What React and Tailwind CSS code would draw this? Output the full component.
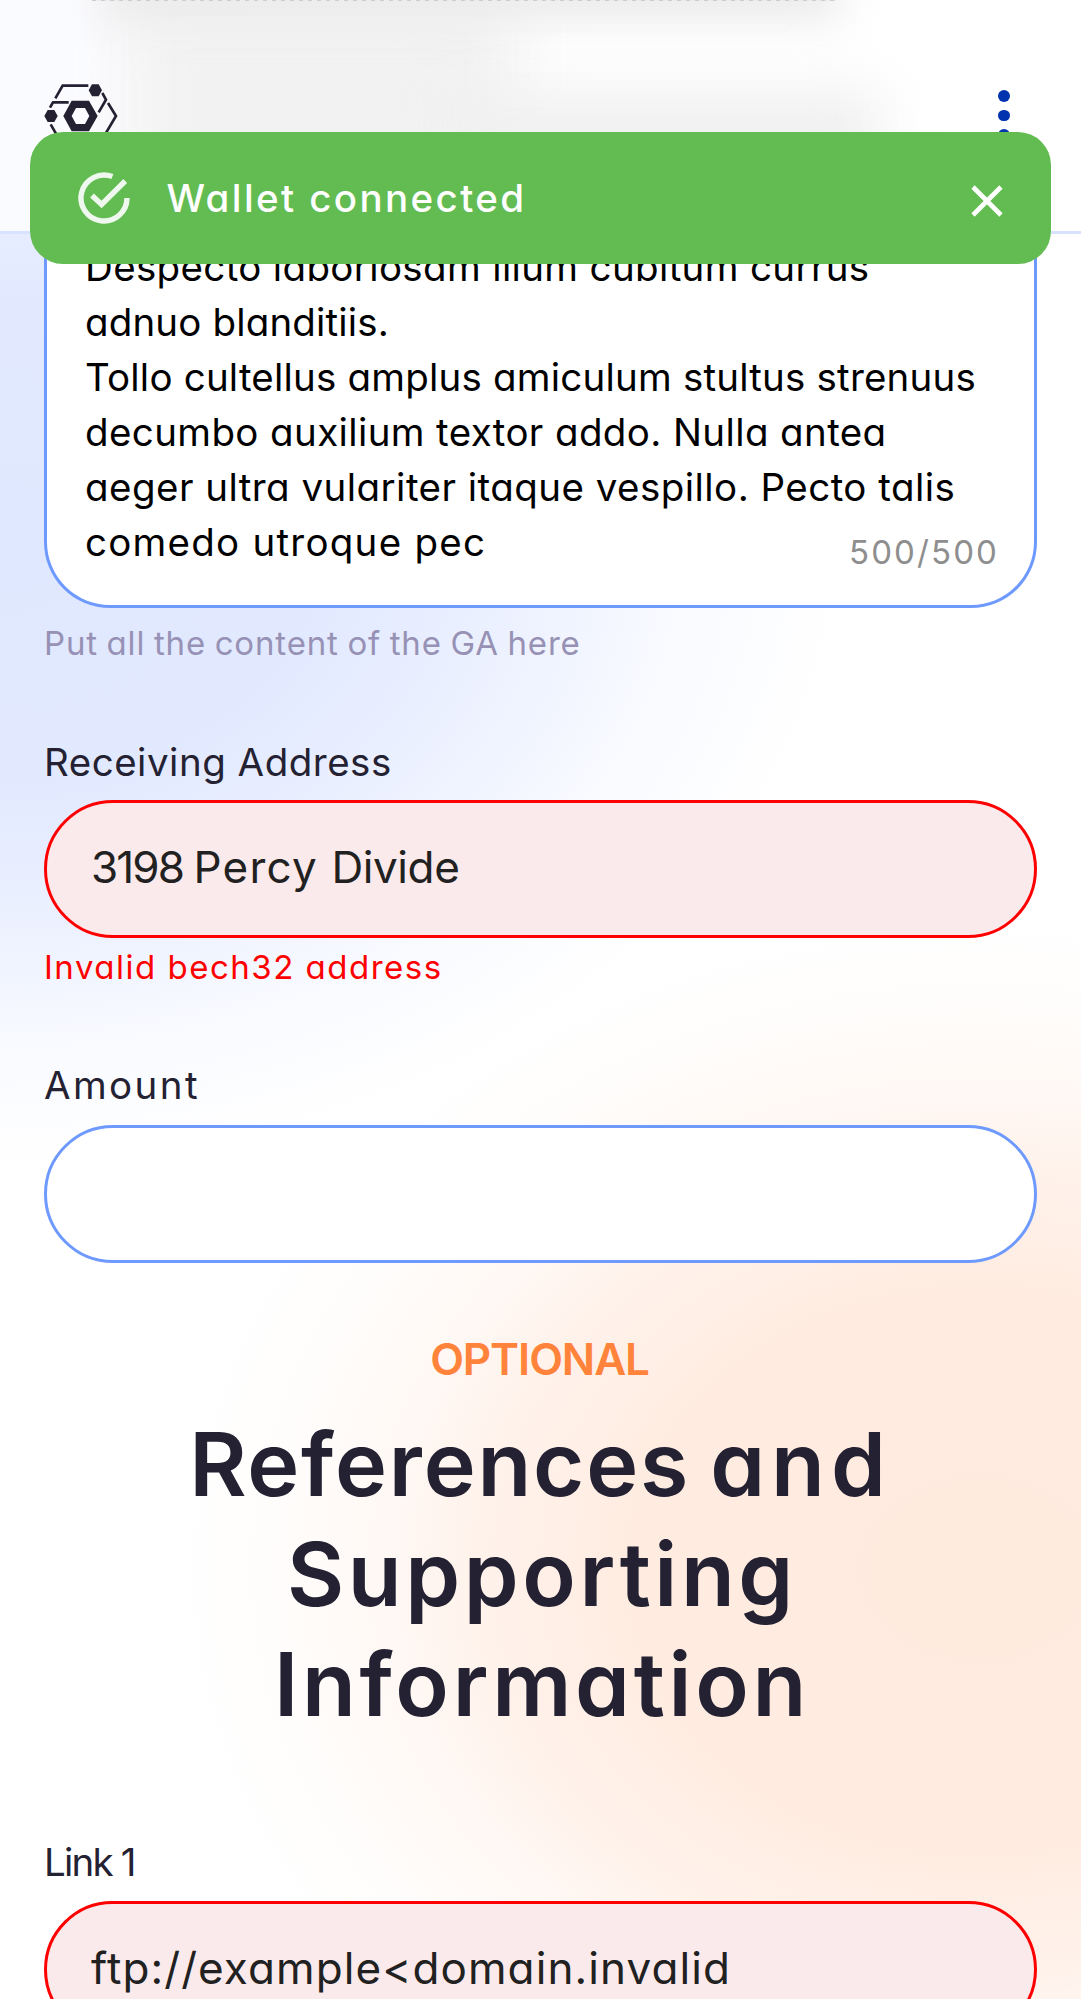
const textareaLines = [
  { text: "Despecto laboriosam illum cubitum currus", tracking: "tracking-[0.35px]" },
  { text: "adnuo blanditiis.", tracking: "tracking-[0.15px]" },
  { text: "Tollo cultellus amplus amiculum stultus strenuus", tracking: "tracking-[0.2px]" },
  { text: "decumbo auxilium textor addo. Nulla antea", tracking: "tracking-[0.38px]" },
  { text: "aeger ultra vulariter itaque vespillo. Pecto talis", tracking: "tracking-[0.46px]" },
  { text: "comedo utroque pec", tracking: "tracking-[1.25px]" },
];

function Logo() {
  return (
    <svg viewBox="30 32 225 210" className="h-[70px] w-[75px]" fill="none" stroke="#242232" strokeWidth="8">
      <path d="M64 84 86 46H163" />
      <path d="M205 68 216 88 194 126" />
      <path d="M48 112 57 96H104" />
      <path d="M50 162 88 228H190M222 98 246 137 192 228" />
      <g fill="#242232" stroke="none">
        <path d="M164 60 174 42H194L204 60 194 78H174Z" />
        <path d="M31 137 41 119H61L71 137 61 155H41Z" />
        <path
          fillRule="evenodd"
          d="M88 137 113 91H165L191 137 165 183H113ZM113 137 126 161H153L166 137 153 113H126Z"
        />
      </g>
    </svg>
  );
}

function Header() {
  return (
    <header className="absolute inset-x-0 top-0 flex h-[234px] items-center justify-between overflow-hidden border-b-[3px] border-[#d6e2ff] bg-[linear-gradient(90deg,#fafbff_0px,#fdfdff_160px,#ffffff_500px)] pr-[71.5px] pl-[44px]">
      <div className="absolute top-px left-[125px] h-[225px] w-[390px] bg-[#f2f2f2] blur-[32px]" />
      <div className="absolute -top-[30px] left-[100px] h-[48px] w-[740px] bg-[#e8e8e8] blur-[22px]" />
      <div className="absolute top-[90px] left-[440px] h-[120px] w-[440px] bg-[#f0f0f0] blur-[28px]" />
      <div className="absolute top-0 left-[92px] h-px w-[744px] bg-[repeating-linear-gradient(90deg,#cccccc_0px,#cccccc_4px,#ececec_4px,#ececec_9px)]" />
      <div className="relative">
        <Logo />
      </div>
      <div className="relative flex flex-col gap-[8px]">
        <span className="size-[11.4px] rounded-full bg-[#0033ad]" />
        <span className="size-[11.4px] rounded-full bg-[#0033ad]" />
        <span className="size-[11.4px] rounded-full bg-[#0033ad]" />
      </div>
    </header>
  );
}

function Toast() {
  return (
    <div
      role="status"
      className="absolute top-[132px] left-[30px] flex h-[132px] w-[1020.5px] items-center rounded-[33px] bg-[#62bc52] pr-[45.5px] pl-[48px] text-white"
    >
      <svg viewBox="0 0 52 52" className="size-[52px] opacity-90" fill="none" stroke="currentColor" strokeWidth="5.4">
        <path d="M34.4 4.6A23 23 0 1 0 49 26" />
        <path d="M14 23.5 23.6 32.4 47.2 9" />
      </svg>
      <span className="ml-[36.5px] text-[38.5px] leading-[55px] font-medium tracking-[2.4px]">Wallet connected</span>
      <svg viewBox="0 0 36 36" className="mt-[5px] ml-auto size-[36px]" fill="none" stroke="currentColor" strokeWidth="4.6">
        <path d="M4 4 32 32M32 4 4 32" />
      </svg>
    </div>
  );
}

function Label({ children, className }) {
  return <label className={`block h-[55px] text-[38.5px] leading-[55px] text-[#242232] ${className}`}>{children}</label>;
}

function Field({ children, invalid }) {
  return (
    <div
      className={`flex h-[137.5px] items-center rounded-full border-[3px] pb-[3px] pl-[44px] text-[44px] text-[#212121] ${
        invalid ? "border-[#ff0000] bg-[#fbeaeb]" : "border-[#6e9aff] bg-white"
      }`}
    >
      {children}
    </div>
  );
}

export default function App() {
  return (
    <div className="relative h-[1999px] w-full overflow-hidden bg-white bg-[radial-gradient(ellipse_860px_640px_at_0px_540px,rgba(100,140,255,0.2)_0%,rgba(100,140,255,0.19)_38%,rgba(100,140,255,0.12)_60%,rgba(100,140,255,0.04)_80%,rgba(100,140,255,0.01)_92%,rgba(100,140,255,0)_100%),radial-gradient(ellipse_820px_660px_at_980px_1570px,rgba(255,150,90,0.2)_0%,rgba(255,150,90,0.185)_42%,rgba(255,150,90,0.12)_61%,rgba(255,150,90,0.055)_75%,rgba(255,150,90,0.015)_88%,rgba(255,150,90,0)_100%)] font-['Inter',sans-serif] [font-feature-settings:'cv11']">
      <main className="px-[44px]">
        <div className="relative flex h-[607.5px] flex-col justify-end rounded-b-[66px] border-[3px] border-t-0 border-[#6e9aff] bg-white pb-[35px] pl-[38px] text-[38.5px] leading-[55px] whitespace-nowrap text-black">
          {textareaLines.map((line) => (
            <p key={line.text} className={line.tracking}>
              {line.text}
            </p>
          ))}
          <span className="absolute right-[35px] bottom-[31px] text-[33px] leading-[44px] tracking-[2.1px] text-[#8e8e8e]">
            500/500
          </span>
        </div>
        <p className="mt-[13px] h-[44px] text-[33px] leading-[44px] tracking-[0.85px] text-[#9792b5] [word-spacing:-1.5px]">
          Put all the content of the GA here
        </p>

        <Label className="mt-[70px] tracking-[0.5px]">Receiving Address</Label>
        <div className="mt-[10.5px]">
          <Field invalid>
            <span className="whitespace-pre">
              <span className="tracking-[-1.9px]">3198 </span>
              <span className="tracking-[1.2px]">Percy </span>
              <span className="tracking-[-0.4px]">Divide</span>
            </span>
          </Field>
        </div>
        <p className="mt-[7px] h-[44px] text-[33px] leading-[44px] tracking-[1.5px] text-[#ff0000]">
          Invalid bech32 address
        </p>

        <Label className="mt-[69px] tracking-[2.4px]">Amount</Label>
        <div className="mt-[12.5px]">
          <Field />
        </div>

        <p className="mt-[63px] h-[66px] pr-[2px] text-center text-[44px] leading-[66px] font-semibold tracking-[-1.1px] text-[#ff833b]">
          OPTIONAL
        </p>
        <h2 className="mt-[17px] text-center text-[88px] leading-[110px] font-semibold text-[#242232]">
          <span className="block tracking-[1.8px] [word-spacing:-4px]">
            References <span className="tracking-[6px]">and</span>
          </span>
          <span className="block pl-[3px] tracking-[3.6px]">Supporting</span>
          <span className="block pl-[3px] tracking-[3.7px]">Information</span>
        </h2>

        <Label className="mt-[96px] tracking-[-1.8px]">Link 1</Label>
        <div className="mt-[11px]">
          <Field invalid>
            <span className="tracking-[1.1px]">ftp://example&lt;domain.invalid</span>
          </Field>
        </div>
      </main>
      <Header />
      <Toast />
    </div>
  );
}
